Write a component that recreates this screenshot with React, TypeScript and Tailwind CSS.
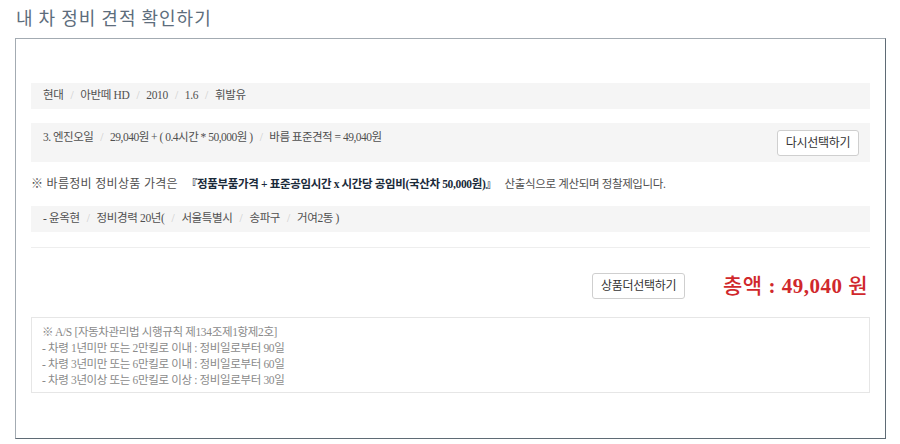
import React from 'react';

const font = { fontFamily: '"Liberation Serif", "Noto Sans CJK KR", serif' };
const kr = { fontFamily: '"Noto Sans CJK KR", sans-serif' };

function Sep() {
  return <span className="mx-[7px] text-[#cccccc]">/</span>;
}

function Crumbs({ items }: { items: string[] }) {
  return (
    <>
      {items.map((t, i) => (
        <React.Fragment key={i}>
          {i > 0 && <Sep />}
          <span>{t}</span>
        </React.Fragment>
      ))}
    </>
  );
}

export default function App() {
  return (
    <div className="w-[900px] h-[444px] bg-white text-[11.5px] tracking-[-0.35px] text-[#555]" style={font}>
      <h2
        className="pl-[16px] pt-[6px] h-[38px] text-[18px] leading-[22px] text-[#5d6d7c] tracking-[1px] font-normal"
        style={kr}
      >
        내 차 정비 견적 확인하기
      </h2>

      <div className="ml-[15px] w-[871px] h-[401px] border border-[#a3abb2] border-r-[#5f6b75] border-b-[#5f6b75] px-[15px] pt-[44px]">
        {/* car info */}
        <div className="h-[26px] bg-[#f5f5f5] flex items-center px-[12px] text-[#505050]">
          <Crumbs items={['현대', '아반떼 HD', '2010', '1.6', '휘발유']} />
        </div>

        {/* product */}
        <div className="mt-[14px] h-[39px] bg-[#f5f5f5] flex items-start justify-between pl-[12px] pr-[11px] pt-[7px] text-[#505050]">
          <div className="leading-[13px] pt-[1px] tracking-[-0.5px]">
            <Crumbs items={['3. 엔진오일', '29,040원 + ( 0.4시간 * 50,000원 )', '바름 표준견적 = 49,040원']} />
          </div>
          <button className="h-[26px] w-[82px] bg-white border border-[#cfcfcf] rounded-[3px] text-[12px] tracking-[-0.3px] text-[#333]">
            다시선택하기
          </button>
        </div>

        {/* notice */}
        <p className="mt-[14px] h-[16px] leading-[16px] text-[#505050] flex items-center">
          <span className="text-[12px] tracking-[0.3px]">※ 바름정비 정비상품 가격은</span>
          <b className="ml-[8px] mr-[8px] text-[#1a2a3a]">『정품부품가격 + 표준공임시간 x 시간당 공임비(국산차 50,000원)』</b>
          <span>산출식으로 계산되며 정찰제입니다.</span>
        </p>

        {/* mechanic */}
        <div className="mt-[14px] h-[26px] bg-[#f5f5f5] flex items-center px-[12px] text-[#505050]">
          <span>- 윤옥현</span>
          <Sep />
          <span>정비경력 20년(</span>
          <Sep />
          <span>서울특별시</span>
          <Sep />
          <span>송파구</span>
          <Sep />
          <span>거여2동 )</span>
        </div>

        <div className="mt-[15px] border-t border-[#eeeeee]" />

        {/* total */}
        <div className="mt-[25px] h-[26px] flex items-center justify-end pr-[2px]">
          <button className="h-[26px] w-[93px] bg-white border border-[#cfcfcf] rounded-[3px] text-[12px] tracking-[-0.3px] text-[#333]">
            상품더선택하기
          </button>
          <span className="ml-[38px] text-[21px] font-bold text-[#d0282c] tracking-[0.5px]">
            <span style={{ ...kr, fontWeight: 500 }}>총액</span> : 49,040{' '}
            <span style={{ ...kr, fontWeight: 500 }}>원</span>
          </span>
        </div>

        {/* A/S */}
        <div className="mt-[18px] h-[76px] border border-[#e6e6e6] px-[10px] pt-[6px] text-[#8a8a8a] leading-[16px]">
          <div>※ A/S [자동차관리법 시행규칙 제134조제1항제2호]</div>
          <div>- 차령 1년미만 또는 2만킬로 이내 : 정비일로부터 90일</div>
          <div>- 차령 3년미만 또는 6만킬로 이내 : 정비일로부터 60일</div>
          <div>- 차령 3년이상 또는 6만킬로 이상 : 정비일로부터 30일</div>
        </div>
      </div>
    </div>
  );
}
